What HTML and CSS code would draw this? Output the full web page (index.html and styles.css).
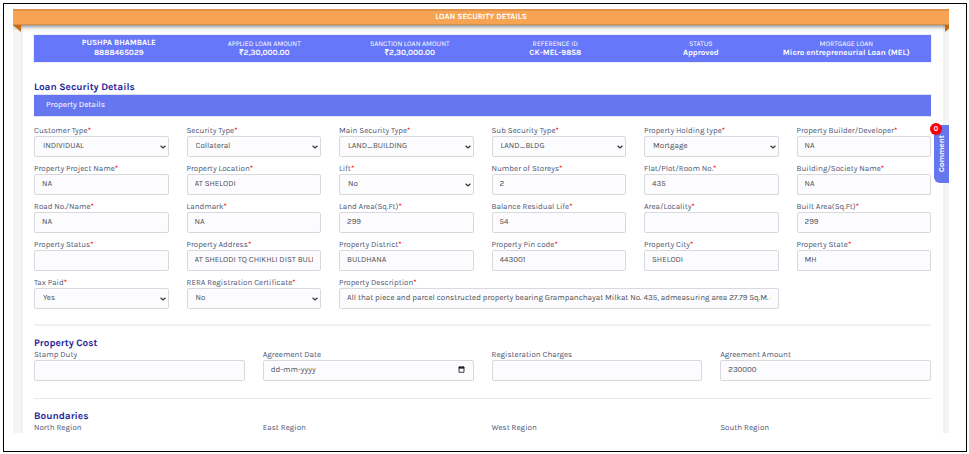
FILE: index.html
```html
<!DOCTYPE html>
<html lang="en">
<head>
<meta charset="utf-8">
<title>Loan Security Details</title>
<link rel="stylesheet" href="styles.css">
</head>
<body>
<div class="frame">
<div class="page">
  <header class="ribbon">LOAN SECURITY DETAILS</header>
  <main class="panel">
    <section class="summary">
      <div class="fact"><b>PUSHPA BHAMBALE</b><b>8888465029</b></div>
      <div class="fact"><span>APPLIED LOAN AMOUNT</span><b>₹2,30,000.00</b></div>
      <div class="fact"><span>SANCTION LOAN AMOUNT</span><b>₹2,30,000.00</b></div>
      <div class="fact"><span>REFERENCE ID</span><b>CK-MEL-9858</b></div>
      <div class="fact"><span>STATUS</span><b>Approved</b></div>
      <div class="fact"><span>MORTGAGE LOAN</span><b>Micro entrepreneurial Loan (MEL)</b></div>
    </section>
    <form>
      <h1 class="title first">Loan Security Details</h1>
      <h2 class="bar">Property Details</h2>
      <div class="grid six">
        <div class="field"><label for="ctype">Customer Type<i>*</i></label><select id="ctype"><option>INDIVIDUAL</option></select></div>
        <div class="field"><label for="stype">Security Type<i>*</i></label><select id="stype"><option>Collateral</option></select></div>
        <div class="field"><label for="mtype">Main Security Type<i>*</i></label><select id="mtype"><option>LAND_BUILDING</option></select></div>
        <div class="field"><label for="sub">Sub Security Type<i>*</i></label><select id="sub"><option>LAND_BLDG</option></select></div>
        <div class="field"><label for="hold">Property Holding type<i>*</i></label><select id="hold"><option>Mortgage</option></select></div>
        <div class="field"><label for="builder">Property Builder/Developer<i>*</i></label><input id="builder" type="text" value="NA"></div>

        <div class="field"><label for="project">Property Project Name<i>*</i></label><input id="project" type="text" value="NA"></div>
        <div class="field"><label for="loc">Property Location<i>*</i></label><input id="loc" type="text" value="AT SHELODI"></div>
        <div class="field"><label for="lift">Lift<i>*</i></label><select id="lift"><option>No</option></select></div>
        <div class="field"><label for="storeys">Number of Storeys<i>*</i></label><input id="storeys" type="text" value="2"></div>
        <div class="field"><label for="flat">Flat/Plot/Room No.<i>*</i></label><input id="flat" type="text" value="435"></div>
        <div class="field"><label for="society">Building/Society Name<i>*</i></label><input id="society" type="text" value="NA"></div>

        <div class="field"><label for="road">Road No./Name<i>*</i></label><input id="road" type="text" value="NA"></div>
        <div class="field"><label for="landmark">Landmark<i>*</i></label><input id="landmark" type="text" value="NA"></div>
        <div class="field"><label for="land">Land Area(Sq.Ft)<i>*</i></label><input id="land" type="text" value="299"></div>
        <div class="field"><label for="life">Balance Residual Life<i>*</i></label><input id="life" type="text" value="54"></div>
        <div class="field"><label for="area">Area/Locality<i>*</i></label><input id="area" type="text"></div>
        <div class="field"><label for="built">Built Area(Sq.Ft)<i>*</i></label><input id="built" type="text" value="299"></div>

        <div class="field"><label for="pstatus">Property Status<i>*</i></label><input id="pstatus" type="text"></div>
        <div class="field"><label for="address">Property Address<i>*</i></label><input id="address" type="text" value="AT SHELODI TQ CHIKHLI DIST BULDHANA"></div>
        <div class="field"><label for="district">Property District<i>*</i></label><input id="district" type="text" value="BULDHANA"></div>
        <div class="field"><label for="pin">Property Pin code<i>*</i></label><input id="pin" type="text" value="443001"></div>
        <div class="field"><label for="city">Property City<i>*</i></label><input id="city" type="text" value="SHELODI"></div>
        <div class="field"><label for="state">Property State<i>*</i></label><input id="state" type="text" value="MH"></div>

        <div class="field"><label for="tax">Tax Paid<i>*</i></label><select id="tax"><option>Yes</option></select></div>
        <div class="field"><label for="rera">RERA Registration Certificate<i>*</i></label><select id="rera"><option>No</option></select></div>
        <div class="field wide"><label for="desc">Property Description<i>*</i></label><input id="desc" type="text" value="All that piece and parcel constructed property bearing Grampanchayat Milkat No. 435, admeasuring area 27.79 Sq.M. situated"></div>
      </div>
      <hr>
      <h2 class="title">Property Cost</h2>
      <div class="grid four">
        <div class="field"><label for="stamp">Stamp Duty</label><input id="stamp" type="text"></div>
        <div class="field"><label for="date">Agreement Date</label>
          <div class="date"><input id="date" type="text" placeholder="dd-mm-yyyy"><button type="button" aria-label="Open calendar"><svg viewBox="0 0 14 14"><path d="M2 2h10v10.500H2z" fill="none" stroke="#111" stroke-width="1.600"/><path d="M2 2.500h10v2h-10zM3.500 0v3M10.500 0v3" fill="#111" stroke="#111" stroke-width="1.200"/></svg></button></div></div>
        <div class="field"><label for="reg">Registeration Charges</label><input id="reg" type="text"></div>
        <div class="field"><label for="amount">Agreement Amount</label><input id="amount" type="text" value="230000"></div>
      </div>
      <hr class="thin">
      <h2 class="title">Boundaries</h2>
      <div class="grid four regions">
        <span>North Region</span><span>East Region</span><span>West Region</span><span>South Region</span>
      </div>
    </form>
  </main>
  <button class="comment" type="button"><span class="word">Comment</span><span class="count">0</span></button>
</div>
</div>
</body>
</html>
```
FILE: styles.css
```css
* { box-sizing: border-box; }
body {
  margin: 0;
  padding: 3px 2px 2px 3px;
  background: #fff;
  color: #4d5577;
  font: 8px/12px Karla, "Liberation Sans", sans-serif;
  text-rendering: geometricPrecision;
}
.frame {
  border: 1px solid #000;
  padding: 5px 17px 18px 9px;
}
.page {
  position: relative;
  background: #f4f4f5;
  padding: 0 4px 0 8px;
}
.ribbon {
  position: relative;
  z-index: 1;
  margin: 0 -4px 0 -8px;
  height: 16px;
  line-height: 13px;
  border-top: 2px solid #e3924a;
  border-bottom: 1px solid #d98d45;
  background: #f6a453;
  box-shadow: 0 1px 5px rgba(0, 0, 0, 0.6);
  clip-path: inset(0 0 -8px 0);
  color: #fff;
  font-weight: bold;
  text-align: center;
}
.ribbon::before,
.ribbon::after {
  content: "";
  position: absolute;
  top: 14px;
  height: 7px;
  background: #c56a0d;
}
.ribbon::before {
  left: 0;
  width: 8px;
  clip-path: polygon(0 0, 100% 0, 100% 100%);
}
.ribbon::after {
  right: 0;
  width: 4px;
  clip-path: polygon(0 0, 100% 0, 100% 50%, 0 100%);
}
.panel {
  background: #fff;
  border: solid #edf0f6;
  border-width: 0 2px;
  padding: 10px 12px 0 11px;
}
.summary {
  display: grid;
  grid-template-columns: repeat(6, 1fr);
  padding: 4px 12px 3px;
  background: #6777fa;
  color: #fff;
  text-align: center;
  box-shadow: 0 0 1px #8f9bf5;
}
.fact {
  display: flex;
  flex-direction: column;
  line-height: 10px;
  white-space: nowrap;
}
.fact span { font-size: 7px; }
.title {
  margin: 0 0 2px;
  color: #1e1d98;
  font-size: 10px;
  line-height: 12px;
}
.first { margin: 19px 0 1px; }
.bar {
  margin: 0 0 10px;
  padding: 0 12px;
  background: #6676ee;
  border: 1px solid #dde1f6;
  border-width: 1px 0;
  color: #eef0ff;
  font-size: 8px;
  font-weight: 500;
  line-height: 21px;
}
.grid { display: grid; gap: 8px 18px; }
.six { grid-template-columns: repeat(6, minmax(0, 1fr)); }
.four { grid-template-columns: repeat(4, minmax(0, 1fr)); }
.field { display: flex; flex-direction: column; }
.wide { grid-column: span 3; }
.field label, .regions span { line-height: 9px; white-space: nowrap; }
.field i { color: #f00; font-style: normal; font-weight: bold; }
input, select {
  width: 100%;
  height: 21px;
  margin: 0;
  padding: 0 7px;
  border: 1px solid #d8d9dd;
  border-radius: 2px;
  background: #fcfcfe;
  color: #4c4f56;
  font: inherit;
  text-rendering: inherit;
}
select {
  appearance: none;
  padding: 0 8px;
  background: #fcfcfe url("data:image/svg+xml,%3Csvg xmlns='http://www.w3.org/2000/svg' viewBox='0 0 6 4'%3E%3Cpath d='M.6.7 3 3 5.400.7' fill='none' stroke='%23333' stroke-width='1.200'/%3E%3C/svg%3E") no-repeat right 2px center / 6px 4px;
}
input::placeholder { color: #4c4f56; opacity: 1; }
.date { position: relative; }
.date input { display: block; }
.date button {
  position: absolute;
  right: 9px;
  top: 6px;
  width: 7px;
  height: 7px;
  padding: 0;
  border: 0;
  background: none;
}
.date svg { display: block; }
hr {
  margin: 15px 0 11px;
  border: 0;
  border-top: 2px solid #f1f1f2;
}
.thin {
  margin-top: 17px;
  border-top: 1px solid #e9e9eb;
}
.comment {
  position: absolute;
  z-index: 2;
  right: 0;
  top: 116px;
  width: 15px;
  height: 58px;
  padding: 0;
  border: 0;
  border-radius: 0 0 0 6px;
  background: #6676ee;
  color: #fff;
  font: bold 8px/15px Karla, "Liberation Sans", sans-serif;
}
.word {
  display: block;
  writing-mode: vertical-rl;
  transform: rotate(180deg);
}
.count {
  position: absolute;
  left: -4px;
  top: -2px;
  width: 12px;
  height: 12px;
  border-radius: 50%;
  background: #fb0007;
  font-size: 7px;
  line-height: 12px;
}
```
